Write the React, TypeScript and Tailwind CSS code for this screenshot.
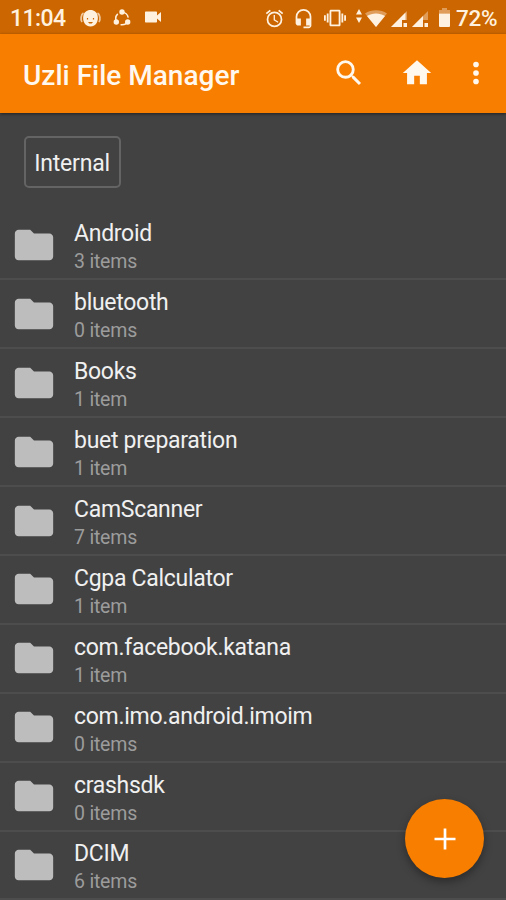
import React from "react";

interface Folder {
  name: string;
  count: string;
}

const folders: Folder[] = [
  { name: "Android", count: "3 items" },
  { name: "bluetooth", count: "0 items" },
  { name: "Books", count: "1 item" },
  { name: "buet preparation", count: "1 item" },
  { name: "CamScanner", count: "7 items" },
  { name: "Cgpa Calculator", count: "1 item" },
  { name: "com.facebook.katana", count: "1 item" },
  { name: "com.imo.android.imoim", count: "0 items" },
  { name: "crashsdk", count: "0 items" },
  { name: "DCIM", count: "6 items" },
];

interface IconProps {
  d: string;
  className?: string;
}

const Icon: React.FC<IconProps> = ({ d, className }) => (
  <svg viewBox="0 0 24 24" fill="currentColor" className={className}>
    <path d={d} />
  </svg>
);

const paths = {
  search:
    "M15.5 14h-.79l-.28-.27A6.47 6.47 0 0 0 16 9.5 6.5 6.5 0 1 0 9.5 16c1.61 0 3.09-.59 4.23-1.57l.27.28v.79l5 4.99L20.49 19l-4.99-5zm-6 0A4.5 4.5 0 1 1 14 9.5 4.49 4.49 0 0 1 9.5 14z",
  home: "M10 20v-6h4v6h5v-8h3L12 3 2 12h3v8z",
  more: "M12 8a2 2 0 1 0 0-4 2 2 0 0 0 0 4zm0 2a2 2 0 1 0 0 4 2 2 0 0 0 0-4zm0 6a2 2 0 1 0 0 4 2 2 0 0 0 0-4z",
  folder:
    "M10 4H4c-1.1 0-1.99.9-1.99 2L2 18c0 1.1.9 2 2 2h16c1.1 0 2-.9 2-2V8c0-1.1-.9-2-2-2h-8l-2-2z",
  add: "M19 12.9h-6.1V19h-1.8v-6.1H5v-1.8h6.1V5h1.8v6.1H19z",
  alarm:
    "M22 5.72l-4.6-3.86-1.29 1.53 4.6 3.86L22 5.72zM7.88 3.39L6.6 1.86 2 5.71l1.29 1.53 4.59-3.85zM12.5 8H11v6l4.75 2.85.75-1.23-4-2.37V8zM12 4a9 9 0 1 0 0 18 9 9 0 0 0 0-18zm0 16a7 7 0 1 1 0-14 7 7 0 0 1 0 14z",
  headset:
    "M12 1a9 9 0 0 0-9 9v7c0 1.66 1.34 3 3 3h3v-8H5v-2a7 7 0 0 1 14 0v2h-4v8h4v1h-7v2h6c1.66 0 3-1.34 3-3V10a9 9 0 0 0-9-9z",
  vibrate:
    "M0 15h2V9H0v6zm3 2h2V7H3v10zm19-8v6h2V9h-2zm-3 8h2V7h-2v10zM16.5 3h-9C6.67 3 6 3.67 6 4.5v15c0 .83.67 1.5 1.5 1.5h9c.83 0 1.5-.67 1.5-1.5v-15c0-.83-.67-1.5-1.5-1.5zM16 19H8V5h8v14z",
};

const Signal: React.FC<{ weak?: boolean }> = ({ weak }) => (
  <svg viewBox="0 0 17 17" fill="currentColor" className="h-[17px] w-[17px]">
    <path d="M0 17 16 1v9h-5v7z" opacity=".4" />
    <path d={weak ? "M0 17 11 6v11z" : "M0 17 14.5 2.5V10H11v7z"} />
    <path d="M12.5 13H16v4h-3.5z" />
  </svg>
);

const StatusBar = () => (
  <div className="flex h-[34px] shrink-0 items-center bg-[#cb6600] pl-[10px] pr-[8px] pt-[2px] text-[#fff1df]">
    <span className="w-[69px] text-[23px] font-medium leading-none tracking-[-0.6px]">11:04</span>
    {/* Notifications */}
    <svg viewBox="0 0 22 18" className="h-[18px] w-[23px]" fill="currentColor">
      <path d="M4 6C5 2.500 8 1 11 1s6 1.500 7 5c1.500 6-1.500 11.500-7 11.500S2.500 12 4 6z" />
      <path
        d="M4 4C1.500 5.500 .8 10.500 2.500 13M18 4c2.500 1.500 3.200 6.500 1.500 9"
        stroke="currentColor"
        strokeWidth="1.8"
        fill="none"
        opacity=".7"
      />
      <path d="M7.400 9h1.200v1.600H7.400zM13.400 9h1.200v1.600h-1.200z" fill="#cb6600" />
      <path d="M8.500 13h5l-1.300 1.500H9.800z" fill="#cb6600" />
    </svg>
    <svg viewBox="0 0 18 18" className="ml-[11px] h-[18px] w-[18px]" fill="currentColor">
      <circle cx="9" cy="9.5" r="6.3" fill="none" stroke="currentColor" strokeWidth="1.5" strokeDasharray="9.2 4" strokeDashoffset="-2" />
      <circle cx="9" cy="3" r="2.7" />
      <circle cx="3.3" cy="13" r="2.7" />
      <circle cx="14.7" cy="13" r="2.7" />
    </svg>
    <svg viewBox="0 0 16 12" className="-mt-[2px] ml-[14px] h-[12px] w-[16px]" fill="currentColor">
      <path d="M1 .5h10c.6 0 1 .4 1 1v3L16 1v10l-4-3.500v3c0 .6-.4 1-1 1H1c-.6 0-1-.4-1-1v-9c0-.6.400-1 1-1z" />
    </svg>
    {/* System icons */}
    <Icon d={paths.alarm} className="ml-auto h-[21px] w-[21px]" />
    <Icon d={paths.headset} className="ml-[8px] h-[21px] w-[21px]" />
    <Icon d={paths.vibrate} className="ml-[9px] h-[22px] w-[24px]" />
    <svg viewBox="0 0 6 14" className="-mt-[5px] ml-[9px] h-[14px] w-[6px]" fill="currentColor">
      <path d="M3 0l3 5.500H0zM3 14l3-5.500H0z" />
    </svg>
    <svg viewBox="0 0 22 17" className="ml-[3px] h-[17px] w-[22px]" fill="currentColor">
      <path d="M11 17 0 3.500C6 -.8 16 -.8 22 3.500z" opacity=".4" />
      <path d="M11 17 2 6c5-3.500 13-3.500 18 0z" />
    </svg>
    <div className="ml-[4px] flex gap-[4px]">
      <Signal />
      <Signal weak />
    </div>
    <svg viewBox="0 0 11 19" className="-mt-[1px] ml-[10px] h-[19px] w-[11px]" fill="currentColor">
      <path d="M3 0h5v2h3v3.500H0V2h3z" opacity=".4" />
      <path d="M0 5.500h11V18a1 1 0 0 1-1 1H1a1 1 0 0 1-1-1z" />
    </svg>
    <span className="ml-[6px] w-[42px] whitespace-nowrap text-[22.5px] font-medium leading-none tracking-[-0.3px]">
      72%
    </span>
  </div>
);

const AppBar = () => (
  <div className="relative flex h-[78.5px] shrink-0 items-center bg-[#f87e00] pl-[23px] pr-[13px] text-[#fff8ef] shadow-[0_1px_3px_rgba(0,0,0,0.5)]">
    <h1 className="flex-1 whitespace-nowrap pt-[5px] text-[28px] font-medium leading-none">
      Uzli File Manager
    </h1>
    <button className="mr-[34px]">
      <Icon d={paths.search} className="h-[34px] w-[34px]" />
    </button>
    <button className="mr-[25px]">
      <Icon d={paths.home} className="h-[34px] w-[34px]" />
    </button>
    <button>
      <Icon d={paths.more} className="h-[34px] w-[34px]" />
    </button>
  </div>
);

const FolderRow: React.FC<{ folder: Folder }> = ({ folder }) => (
  <div className="flex h-[68.9px] shrink-0 items-center border-b-2 border-[#4d4d4d] pl-[11px]">
    <Icon d={paths.folder} className="h-[46px] w-[46px] shrink-0 text-[#bdbdbd]" />
    <div className="ml-[17px] whitespace-nowrap pt-[7px]">
      <div className="text-[23px] leading-[28px] tracking-[-0.29px] text-[#f0f0f0]">
        {folder.name}
      </div>
      <div className="text-[19.5px] leading-[28px] tracking-[-0.2px] text-[#9c9c9c]">
        {folder.count}
      </div>
    </div>
  </div>
);

export default function App() {
  return (
    <div className="relative flex h-[900px] w-[506px] flex-col overflow-hidden bg-[#424242] font-['Roboto',sans-serif]">
      <StatusBar />
      <AppBar />

      {/* Breadcrumb */}
      <div className="flex h-[99px] shrink-0 items-center pl-[23.5px]">
        <button className="h-[52px] w-[97px] rounded-[5px] border-2 border-[#646464] pt-[4px] text-[23px] tracking-[-0.2px] text-[#f0f0f0]">
          Internal
        </button>
      </div>

      <div className="flex flex-col">
        {folders.map((folder) => (
          <FolderRow key={folder.name} folder={folder} />
        ))}
      </div>

      <button className="absolute bottom-[22px] right-[22px] flex h-[79px] w-[79px] items-center justify-center rounded-full bg-[#f87e00] text-white shadow-[0_4px_8px_rgba(0,0,0,0.35)]">
        <Icon d={paths.add} className="h-[36px] w-[36px]" />
      </button>
    </div>
  );
}
